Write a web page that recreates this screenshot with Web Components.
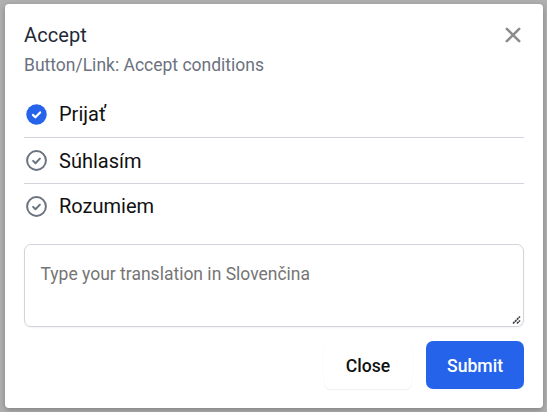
<!DOCTYPE html>
<html lang="sk"><head><meta charset="utf-8"><title>Accept</title>
<style>
html,body{height:100%}
body{margin:0;box-sizing:border-box;padding:4px 4px 4px 5px;background:#b0b0b0;font-family:Roboto,sans-serif;overflow:hidden}
</style></head><body>
<translation-dialog>
  <span slot="title">Accept</span>
  <span slot="context">Button/Link: Accept conditions</span>
  <suggestion-item selected>Prijať</suggestion-item>
  <suggestion-item>Súhlasím</suggestion-item>
  <suggestion-item>Rozumiem</suggestion-item>
  <translation-input slot="input" placeholder="Type your translation in Slovenčina"></translation-input>
  <dialog-button slot="actions">Close</dialog-button>
  <dialog-button slot="actions" primary>Submit</dialog-button>
</translation-dialog>
<script>
class Base extends HTMLElement{
  constructor(){super();this.attachShadow({mode:'open'})}
  connectedCallback(){this.shadowRoot.innerHTML=this.render()}
}
customElements.define('translation-dialog',class extends Base{render(){return `
<style>
:host{display:flex;flex-direction:column;box-sizing:border-box;height:404px;width:538px;padding:17px 19px 19px;background:#fff;border-radius:4px;box-shadow:0 2px 6px rgba(0,0,0,.28)}
header{display:flex;justify-content:space-between;height:71px}
h2,p{margin:0;font-weight:400;white-space:nowrap}
h2{font-size:20px;line-height:28px;color:#1f2937;letter-spacing:.1px}
p{font-size:17.5px;line-height:24px;color:#6b7280;margin-top:4px}
header svg{width:16px;height:16px;margin:5.5px 3px 0 0}
main{display:block;height:138px}
footer{display:flex;justify-content:flex-end;gap:14px;margin-top:14px}
</style>
<header><div><h2><slot name="title"></slot></h2><p><slot name="context"></slot></p></div>
<svg viewBox="0 0 16 16"><path d="M1.8 1.8 14.2 14.2M14.2 1.8 1.8 14.2" stroke="#8c8c8c" stroke-width="2.6" stroke-linecap="round"/></svg></header>
<main><slot></slot></main><slot name="input"></slot><footer><slot name="actions"></slot></footer>`}});
customElements.define('suggestion-item',class extends Base{render(){return `
<style>
:host{display:flex;align-items:center;box-sizing:border-box;height:46px;border-bottom:1px solid #d1d5db;font-size:20px;line-height:28px;color:#111;gap:11px;padding-left:1px;padding-bottom:1px}
:host(:nth-of-type(2)){padding-bottom:0}
:host(:last-of-type){border-color:transparent}
svg{width:23px;height:23px;display:block}
</style>
<svg viewBox="0 0 23 23" fill="none">${this.hasAttribute('selected')
?'<circle cx="11.5" cy="11.5" r="10.2" fill="#2563eb"/><path d="m7.9 11.9 2.5 2.4 4.7-4.9" stroke="#fff" stroke-width="2.2" stroke-linecap="round" stroke-linejoin="round"/>'
:'<circle cx="11.5" cy="11.5" r="9.4" stroke="#6b7280" stroke-width="2"/><path d="m8.1 11.9 2.4 2.3 4.4-4.6" stroke="#6b7280" stroke-width="2" stroke-linecap="round" stroke-linejoin="round"/>'}</svg><span><slot></slot></span>`}});
customElements.define('translation-input',class extends Base{render(){return `
<style>
:host{display:block;position:relative;height:83px;margin-top:14px}
textarea{display:block;box-sizing:border-box;width:100%;height:100%;margin:0;padding:16px 15.5px;border:1px solid #d1d5db;border-radius:7px;box-shadow:0 1px 2px rgba(0,0,0,.05);font:17.5px/26px Roboto,sans-serif;resize:none;outline:0;background:#fff;overflow:hidden}
textarea::placeholder{color:#757575;opacity:1}
svg{position:absolute;right:2.5px;bottom:2px;width:10px;height:10px}
</style>
<textarea placeholder="${this.getAttribute('placeholder')}"></textarea>
<svg viewBox="0 0 10 10"><path d="M1 8.5 8 1.5M5 8.5 8 5.5" stroke="#444" stroke-width="1.7" stroke-dasharray="2.2 .5"/></svg>`}});
customElements.define('dialog-button',class extends Base{render(){return `
<style>
:host{display:block}
button{display:block;box-sizing:border-box;width:88px;height:48px;margin:0;padding:2px 0 0;border:0;border-radius:7px;background:#fff;color:#111;font:500 17.6px/27px Roboto,sans-serif;box-shadow:0 1px 2px rgba(0,0,0,.07)}
:host([primary]) button{width:98px;background:#2563eb;color:#fff;box-shadow:none}
</style><button type="button"><slot></slot></button>`}});
</script></body></html>
